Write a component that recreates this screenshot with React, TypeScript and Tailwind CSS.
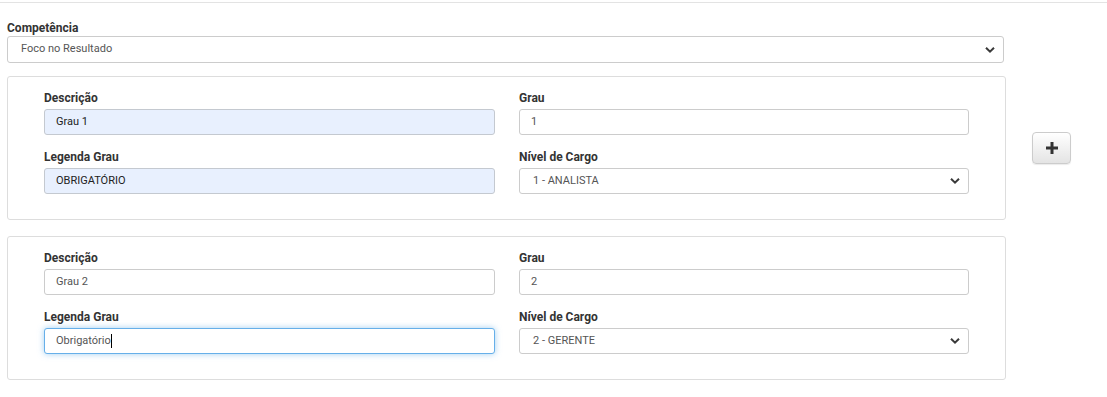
import React from "react";

const font = { fontFamily: "Roboto, 'Liberation Sans', sans-serif" };

function Chevron() {
  return (
    <svg width="10" height="7" viewBox="0 0 10 7" className="absolute right-[8px] top-1/2 -translate-y-1/2 pointer-events-none">
      <path d="M1 1.2 L5 5.2 L9 1.2" fill="none" stroke="#3a3a3a" strokeWidth="2" />
    </svg>
  );
}

function Label({ children, className = "" }: { children: React.ReactNode; className?: string }) {
  return <div className={"text-[12px] leading-[16px] font-bold text-[#333] " + className}>{children}</div>;
}

function Input({ value, autofill, focused }: { value: string; autofill?: boolean; focused?: boolean }) {
  const base = "mt-[3px] h-[26px] rounded-[3px] border flex items-center pl-[11px] text-[11px] text-[#555]";
  const cls = focused
    ? "border-[#66afe9] bg-white shadow-[0_0_6px_rgba(102,175,233,0.6)]"
    : autofill
    ? "border-[#c4c9d0] bg-[#e8f0fe] text-[#222]"
    : "border-[#ccc] bg-white";
  return (
    <div className={base + " " + cls}>
      <span className={autofill ? "text-[#222]" : ""}>{value}</span>
      {focused && <span className="inline-block w-px h-[14px] bg-black" />}
    </div>
  );
}

function Select({ value, className }: { value: string; className: string }) {
  return (
    <div className={"relative rounded-[3px] border border-[#ccc] bg-white flex items-center pl-[13px] text-[11px] text-[#555] " + className}>
      {value}
      <Chevron />
    </div>
  );
}

function Card({ desc, grau, legenda, nivel, first }: { desc: string; grau: string; legenda: string; nivel: string; first?: boolean }) {
  return (
    <div className="w-[999px] border border-[#ddd] rounded-[3px] pt-[13px] pb-[25px] pl-[36px]">
      <div className="grid grid-cols-[451px_450px] gap-x-[24px]">
        <div>
          <Label>Descrição</Label>
          <Input value={desc} autofill={first} />
        </div>
        <div>
          <Label>Grau</Label>
          <Input value={grau} />
        </div>
        <div className="mt-[14px]">
          <Label>Legenda Grau</Label>
          <Input value={legenda} autofill={first} focused={!first} />
        </div>
        <div className="mt-[14px]">
          <Label>Nível de Cargo</Label>
          <Select value={nivel} className="mt-[3px] h-[26px]" />
        </div>
      </div>
    </div>
  );
}

export default function App() {
  return (
    <div className="w-[1107px] h-[397px] bg-white" style={font}>
      <div className="h-[2px]" />
      <div className="border-t border-[#e3e3e3]" />
      <div className="pl-[7px]">
        <Label className="mt-[17px]">Competência</Label>
        <Select value="Foco no Resultado" className="w-[997px] h-[27px]" />
        <div className="flex items-center mt-[13px]">
          <Card first desc="Grau 1" grau="1" legenda="OBRIGATÓRIO" nivel="1 - ANALISTA" />
          <button className="ml-[26px] w-[39px] h-[32px] rounded-[4px] border border-[#ccc] bg-gradient-to-b from-white to-[#e4e4e4] shadow-[0_1px_1px_rgba(0,0,0,0.08)] flex items-center justify-center">
            <svg width="12" height="12" viewBox="0 0 12 12">
              <path d="M4.5 0 H7.5 V4.5 H12 V7.5 H7.5 V12 H4.5 V7.5 H0 V4.5 H4.5 Z" fill="#333" />
            </svg>
          </button>
        </div>
        <div className="mt-[16px]">
          <Card desc="Grau 2" grau="2" legenda="Obrigatório" nivel="2 - GERENTE" />
        </div>
      </div>
    </div>
  );
}
